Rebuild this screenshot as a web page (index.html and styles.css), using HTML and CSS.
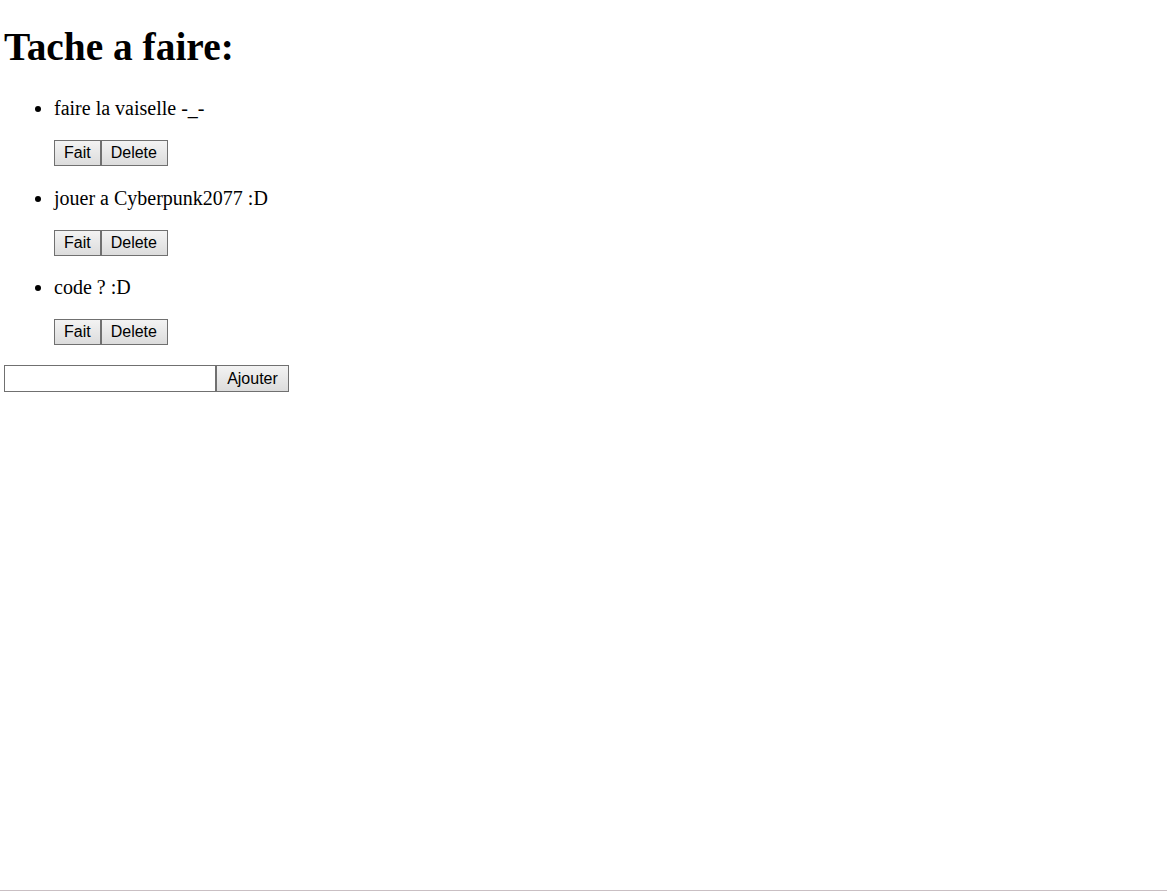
FILE: index.html
```html
<!DOCTYPE html>
<html lang="fr">
<head>
<meta charset="utf-8">
<title>Tache a faire</title>
<link rel="stylesheet" href="styles.css">
</head>
<body>
<h1 class="title">Tache a faire:</h1>
<ul class="tasks">
  <li class="task">
    <span class="task-text">faire la vaiselle -_-</span>
    <div class="actions"><button class="btn">Fait</button><button class="btn btn-delete">Delete</button></div>
  </li>
  <li class="task">
    <span class="task-text">jouer a Cyberpunk2077 :D</span>
    <div class="actions"><button class="btn">Fait</button><button class="btn btn-delete">Delete</button></div>
  </li>
  <li class="task">
    <span class="task-text">code ? :D</span>
    <div class="actions"><button class="btn">Fait</button><button class="btn btn-delete">Delete</button></div>
  </li>
</ul>
<form class="add-form">
  <input class="add-input" type="text"><button class="btn btn-add" type="button">Ajouter</button>
</form>
<div class="window-edge"></div>
</body>
</html>
```
FILE: styles.css
```css
html, body {
  margin: 0;
  padding: 0;
  background: #ffffff;
}
body {
  padding: 0 4px;
  font-family: "Liberation Serif", "Times New Roman", serif;
  font-size: 20px;
  color: #000;
}
.title {
  margin: 26px 0 0 0;
  font-size: 39.4px;
  font-weight: bold;
  line-height: 42px;
}
.tasks {
  margin: 29px 0 0 0;
  padding-left: 50px;
  list-style: disc;
}
.task {
  line-height: 22px;
}
.task + .task {
  margin-top: 20.5px;
}
.task-text {
  display: block;
}
.actions {
  display: flex;
  margin-top: 21px;
}
.btn {
  box-sizing: border-box;
  height: 26px;
  margin: 0;
  padding: 0 9px;
  font-family: "Liberation Sans", Arial, sans-serif;
  font-size: 16px;
  line-height: 18px;
  color: #000;
  background: linear-gradient(#f3f3f3, #dcdcdc);
  border: 1px solid #707070;
  border-radius: 0;
}
.btn-delete {
  padding: 0 10px 0 9px;
}
.add-form {
  display: flex;
  margin: 20px 0 0 0;
}
.add-input {
  box-sizing: border-box;
  width: 212px;
  height: 27px;
  margin: 0;
  padding: 1px 3px;
  border: 1px solid #707070;
  font-family: "Liberation Sans", Arial, sans-serif;
  font-size: 16px;
  background: #fff;
  outline: none;
}
.btn-add {
  height: 27px;
  width: 73px;
  padding: 0 8px;
}
.window-edge {
  position: fixed;
  left: 0;
  right: 0;
  bottom: 0;
  height: 1px;
  background: #c9bfc3;
}
```
